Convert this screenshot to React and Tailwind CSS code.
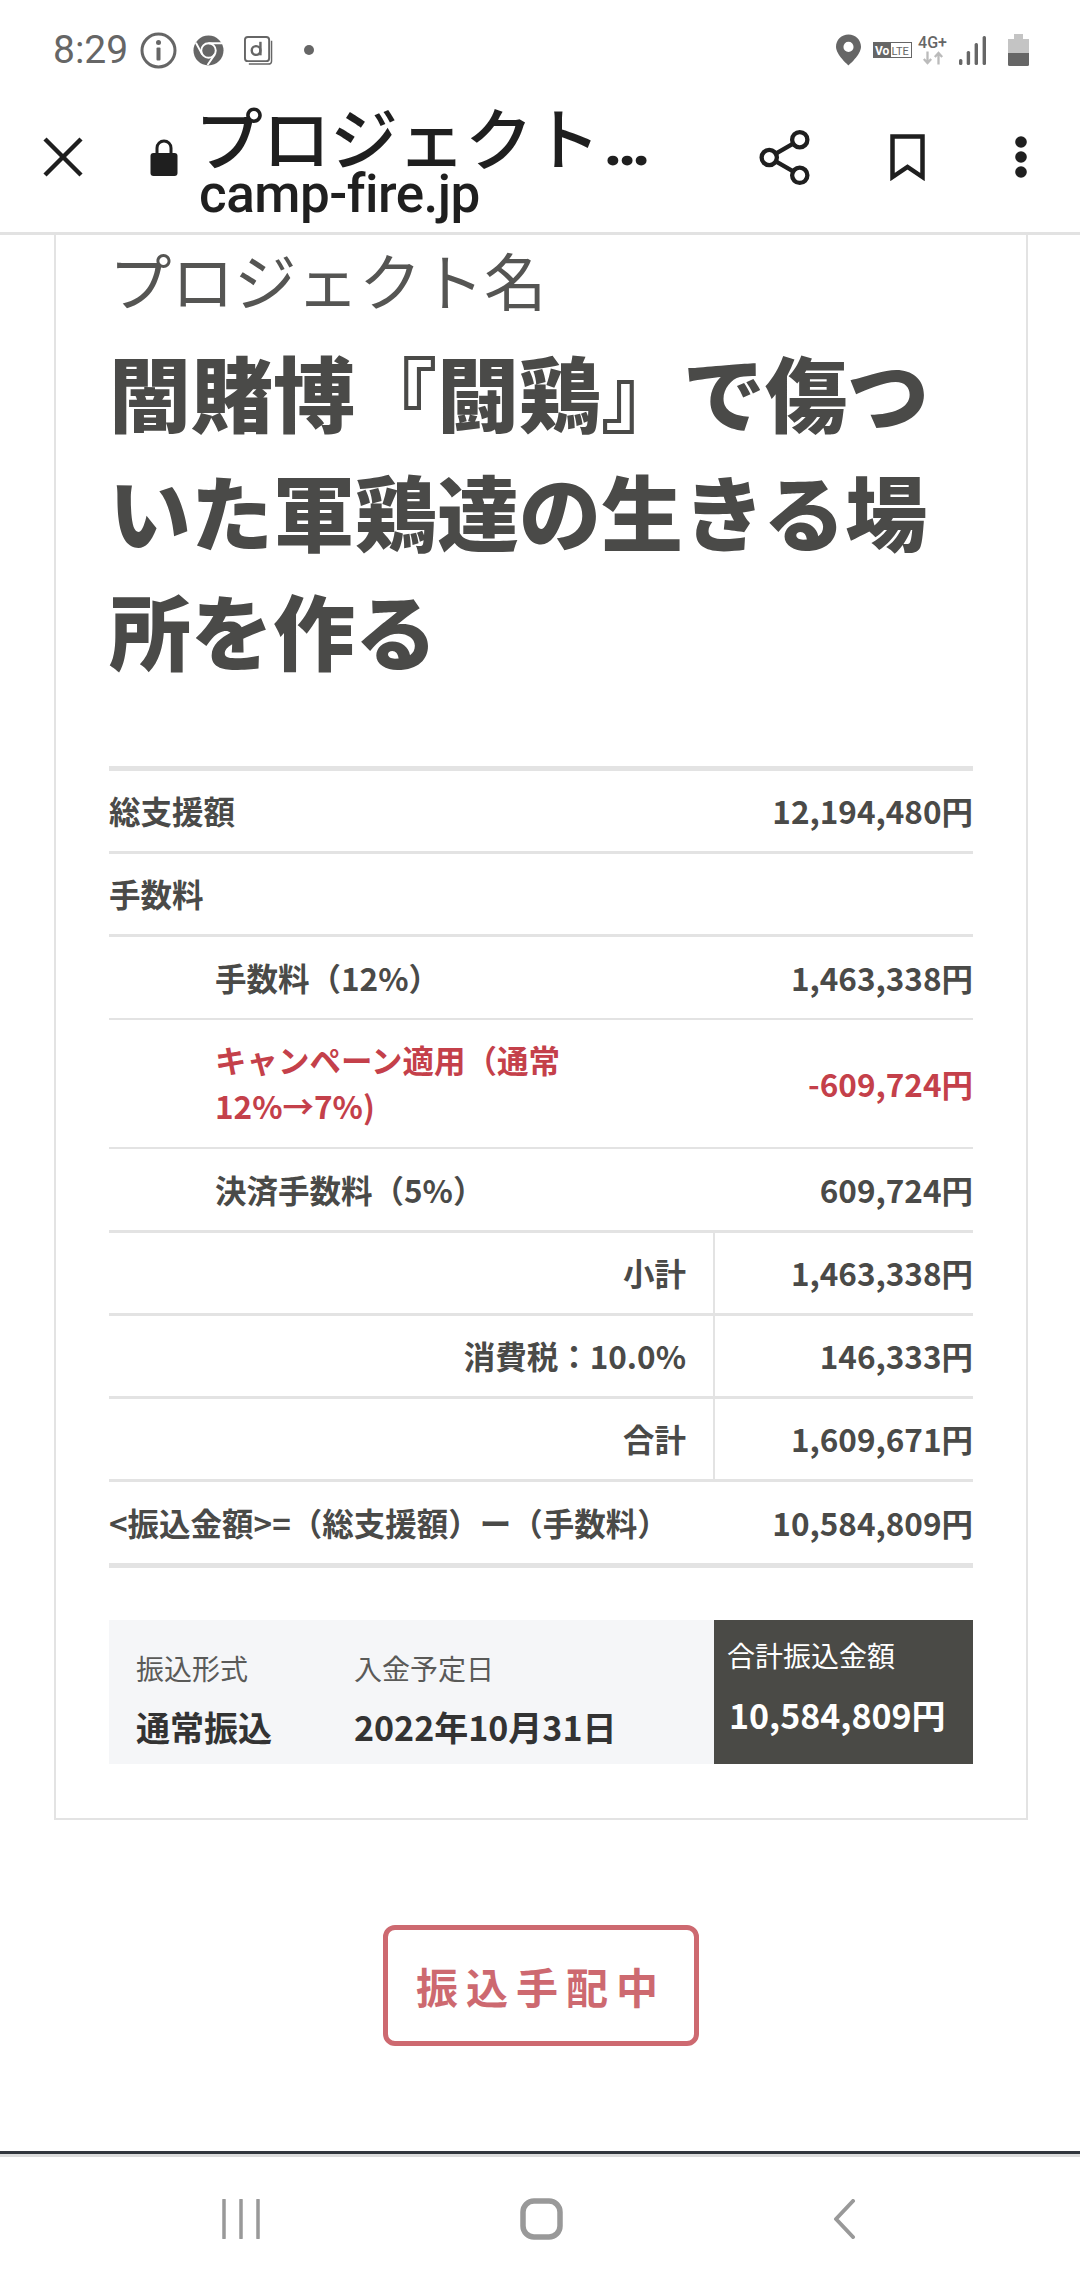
import React from 'react';
import { X, Share2 } from 'lucide-react';

const jp = { fontFamily: '"Noto Sans CJK JP", "Noto Sans", sans-serif' };
const roboto = { fontFamily: 'Roboto, sans-serif' };

const Row = ({ label, value, indent, red, split, height = 'h-[83px]', border = 'border-b-[3px]' }) => {
  const color = red ? 'text-[#c4404a]' : 'text-[#4a4a48]';
  if (split) {
    return (
      <div className={`flex ${height} ${border} border-[#e3e3e3] font-bold text-[31.5px] ${color}`}>
        <div className="w-[606px] flex items-center justify-end pr-[27px] border-r-2 border-[#e3e3e3]">{label}</div>
        <div className="flex-1 flex items-center justify-end">{value}</div>
      </div>
    );
  }
  return (
    <div className={`flex items-center justify-between ${height} ${border} border-[#e3e3e3] font-bold text-[31.5px] ${color} ${indent ? 'pl-[106px]' : ''}`}>
      <div className={red ? 'w-[380px] leading-[46px] mt-[-3px]' : ''}>{label}</div>
      <div>{value}</div>
    </div>
  );
};

const StatusBar = () => (
  <div className="h-[100px] flex items-center justify-between pl-[53px] pr-[51px] text-[#666]">
    <div className="flex items-center">
      <span className="text-[39px] leading-none w-[72px]" style={roboto}>8:29</span>
      <svg className="ml-[15px]" width="37" height="37" viewBox="0 0 37 37">
        <circle cx="18.5" cy="18.5" r="16.5" fill="none" stroke="#666" strokeWidth="3" />
        <circle cx="18.5" cy="10.5" r="2.5" fill="#666" />
        <rect x="16.5" y="15.5" width="4" height="13" rx="1" fill="#666" />
      </svg>
      <svg className="ml-[16px]" width="31" height="31" viewBox="0 0 32 32">
        <circle cx="16" cy="16" r="15.5" fill="#666" />
        <circle cx="16" cy="16" r="7.5" fill="#666" stroke="#fff" strokeWidth="2" />
        <path d="M16 8.5H30M9.5 20L3 8M22.5 20L15 31" stroke="#fff" strokeWidth="2" fill="none" />
      </svg>
      <svg className="ml-[20px]" width="29" height="29" viewBox="0 0 30 30">
        <rect x="1" y="1" width="25" height="25" rx="3" fill="#fff" stroke="#666" strokeWidth="2" />
        <path d="M28.5 5V26Q28.5 29 25 29H5" fill="none" stroke="#666" strokeWidth="1.5" />
        <circle cx="12.5" cy="15" r="4.5" fill="none" stroke="#666" strokeWidth="2.5" />
        <path d="M17 6V20" stroke="#666" strokeWidth="2.5" />
      </svg>
      <span className="ml-[31px] w-[10px] h-[10px] rounded-full bg-[#666]" />
    </div>
    <div className="flex items-center">
      <svg width="25" height="32" viewBox="0 0 26 32">
        <path fillRule="evenodd" d="M13 0C5.8 0 0 5.6 0 12.6 0 21 13 32 13 32S26 21 26 12.6C26 5.6 20.2 0 13 0ZM13 7.5A5.2 5.2 0 1 1 13 18 5.2 5.2 0 0 1 13 7.5Z" fill="#666" />
      </svg>
      <svg className="ml-[12px]" width="39" height="16" viewBox="0 0 39 16">
        <rect x="0.5" y="0.5" width="38" height="15" fill="#fff" stroke="#666" />
        <rect x="0" y="0" width="18" height="16" fill="#666" />
        <text x="2" y="12.5" fontSize="12" fontWeight="700" fill="#fff" fontFamily="Roboto, sans-serif">Vo</text>
        <text x="18.5" y="12.5" fontSize="11" fill="#666" fontFamily="Roboto, sans-serif">LTE</text>
      </svg>
      <div className="ml-[5px] flex flex-col items-center w-[31px]">
        <span className="text-[16px] leading-[15px] font-medium" style={roboto}>4G+</span>
        <svg className="mt-[1px]" width="22" height="14" viewBox="0 0 24 14">
          <path d="M6 0V12M2 8L6 12.5L10 8" fill="none" stroke="#bbb" strokeWidth="2.5" />
          <path d="M18 14V2M14 6L18 1.5L22 6" fill="none" stroke="#bbb" strokeWidth="2.5" />
        </svg>
      </div>
      <svg className="ml-[11px]" width="27" height="29" viewBox="0 0 27 29">
        <rect x="0" y="23" width="3.4" height="6" rx="1.5" fill="#666" />
        <rect x="7.7" y="15" width="3.4" height="14" rx="1.5" fill="#666" />
        <rect x="15.6" y="7" width="3.4" height="22" rx="1.5" fill="#666" />
        <rect x="23.6" y="0" width="3.4" height="29" rx="1.5" fill="#666" />
      </svg>
      <svg className="ml-[22px]" width="21" height="32" viewBox="0 0 21 32">
        <rect x="6" y="0" width="9" height="5" fill="#c4c4c4" />
        <rect x="0" y="5" width="21" height="14" fill="#c4c4c4" />
        <path d="M0 19H21V30.5Q21 32 19.5 32H1.5Q0 32 0 30.5Z" fill="#666" />
      </svg>
    </div>
  </div>
);

const AppBar = () => (
  <div className="h-[135px] flex items-center pb-[18px] border-b-[3px] border-[#e2e2e2] text-[#1f1f1f]">
    <X className="ml-[27px] shrink-0" size={72} strokeWidth={1.5} color="#1f1f1f" strokeLinecap="butt" />
    <svg className="ml-[51px] shrink-0" width="28" height="37" viewBox="0 0 28 37">
      <path d="M7 15V9A7 7 0 0 1 21 9V15" fill="none" stroke="#1f1f1f" strokeWidth="3" />
      <rect x="0.5" y="14" width="27" height="23" rx="3" fill="#1f1f1f" />
    </svg>
    <div className="ml-[17px] w-[460px] self-start mt-[6px]">
      <div className="text-[68px] leading-[60px] font-medium whitespace-nowrap tracking-[-0.5px]">
        プロジェクト<span className="ml-[4px] text-[60px] font-black tracking-[-4px]" style={roboto}>...</span>
      </div>
      <div className="ml-[4px] text-[53px] leading-[38px] font-medium tracking-[-0.5px] whitespace-nowrap" style={roboto}>camp-fire.jp</div>
    </div>
    <Share2 className="ml-[99px] shrink-0" size={61} strokeWidth={1.7} color="#1f1f1f" />
    <svg className="ml-[75px] shrink-0" width="35" height="47" viewBox="0 0 35 47">
      <path d="M2.5 2.5H32.5V43L17.5 33L2.5 43Z" fill="none" stroke="#1f1f1f" strokeWidth="4.5" />
    </svg>
    <svg className="ml-[90px] shrink-0" width="12" height="42" viewBox="0 0 12 42">
      <circle cx="6" cy="6" r="5.8" fill="#1f1f1f" />
      <circle cx="6" cy="21" r="5.8" fill="#1f1f1f" />
      <circle cx="6" cy="36" r="5.8" fill="#1f1f1f" />
    </svg>
  </div>
);

export default function App() {
  return (
    <div className="w-[1080px] h-[2280px] bg-white flex flex-col overflow-hidden" style={jp}>
      <StatusBar />
      <AppBar />

      <div className="ml-[54px] w-[974px] h-[1585px] border-x-2 border-b-2 border-[#e3e3e3] px-[53px] shrink-0">
        <div className="text-[62.5px] leading-[70px] text-[#555553] mt-[9px]">プロジェクト名</div>
        <h1 className="text-[82px] leading-[119px] font-black text-[#4a4a48] mt-[17px] w-[864px]">
          闇賭博『闘鶏』で傷ついた軍鶏達の生きる場所を作る
        </h1>

        <div className="mt-[78px] border-t-[5px] border-[#e3e3e3]">
          <Row label="総支援額" value="12,194,480円" />
          <Row label="手数料" value="" />
          <Row indent label="手数料（12%）" value="1,463,338円" border="border-b-2" />
          <Row indent red label="キャンペーン適用（通常12%→7%)" value="-609,724円" height="h-[129px]" border="border-b-2" />
          <Row indent label="決済手数料（5%）" value="609,724円" height="h-[84px]" />
          <Row split label="小計" value="1,463,338円" />
          <Row split label="消費税：10.0%" value="146,333円" />
          <Row split label="合計" value="1,609,671円" />
          <Row label="<振込金額>=（総支援額）ー（手数料）" value="10,584,809円" height="h-[86px]" border="border-b-[5px]" />
        </div>

        <div className="mt-[52px] h-[144px] flex bg-[#f5f6f8]">
          <div className="w-[245px] pl-[27px] pt-[28px]">
            <div className="text-[28px] leading-[40px] text-[#5a5a58]">振込形式</div>
            <div className="text-[34px] leading-[50px] font-bold text-[#333] mt-[14px]">通常振込</div>
          </div>
          <div className="flex-1 pt-[28px]">
            <div className="text-[28px] leading-[40px] text-[#5a5a58]">入金予定日</div>
            <div className="text-[34px] leading-[50px] font-bold text-[#333] mt-[14px]">2022年10月31日</div>
          </div>
          <div className="w-[259px] bg-[#4a4a46] text-white pl-[13px] pt-[15px]">
            <div className="text-[28px] leading-[40px]">合計振込金額</div>
            <div className="text-[34px] leading-[50px] font-bold mt-[15px] pl-[2px]">10,584,809円</div>
          </div>
        </div>
      </div>

      <div className="mt-[105px] ml-[383px] w-[316px] h-[121px] border-[5px] border-[#cd6970] rounded-[12px] flex items-center justify-center text-[#cd6970] text-[42px] font-bold tracking-[8px] shrink-0">
        振込手配中
      </div>

      <div className="mt-[105px] h-[6px] border-t-[3px] border-[#32363d] bg-[#dcdcdc] shrink-0" />
      <div className="flex-1 flex items-center pl-[222px]">
        <svg width="38" height="40" viewBox="0 0 38 40">
          <path d="M2 1V39M19 1V39M36 1V39" stroke="#999" strokeWidth="3.5" strokeLinecap="round" />
        </svg>
        <svg className="ml-[260px]" width="43" height="42" viewBox="0 0 43 42">
          <rect x="3" y="3" width="37" height="36" rx="11" fill="none" stroke="#999" strokeWidth="5.5" />
        </svg>
        <svg className="ml-[270px]" width="23" height="40" viewBox="0 0 23 40">
          <path d="M20 2L3 20L20 38" fill="none" stroke="#999" strokeWidth="4" strokeLinecap="round" strokeLinejoin="round" />
        </svg>
      </div>
    </div>
  );
}
